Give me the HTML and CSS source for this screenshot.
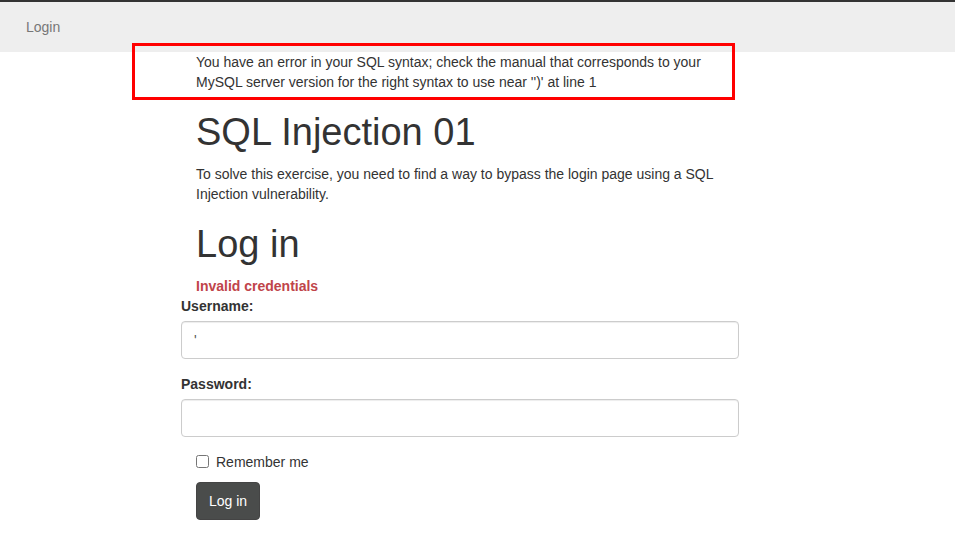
FILE: index.html
```html
<!DOCTYPE html>
<html lang="en">
<head>
    <meta charset="UTF-8">
    <meta name="viewport" content="width=device-width, initial-scale=1.0">
    <title>SQL Injection 01</title>

    <link rel="stylesheet" href="styles.css">

</head>
<body>
<nav class="navbar">
    <a href="#" class="navbar-link">Login</a>
</nav>

<div class="container">
    <div class="sql-error">
        You have an error in your SQL syntax; check the manual that corresponds to your
        MySQL server version for the right syntax to use near '')' at line 1
    </div>

    <h1>SQL Injection 01</h1>
    <p>To solve this exercise, you need to find a way to bypass the login page using a SQL Injection vulnerability.</p>

    <h1>Log in</h1>

    <form class="login-form">
        <div class="text-danger">Invalid credentials</div>
        <div class="form-row">
            <label for="username">Username:</label>
            <input type="text" class="form-control" id="username" name="username" value="'">
        </div>
        <div class="form-row">
            <label for="password">Password:</label>
            <input type="password" class="form-control" id="password" name="password">
        </div>
        <div class="checkbox">
            <label><input type="checkbox" name="remember"> Remember me</label>
        </div>
        <button type="submit" class="btn">Log in</button>
    </form>
</div>

<!-- highlight drawn round the database error -->
<div class="error-mark"></div>
</body>
</html>
```

FILE: styles.css
```css
* {
    box-sizing: border-box;
}

body {
    font-family: "Liberation Sans", Arial, sans-serif;
    font-size: 14px;
    line-height: 20px;
    color: #333;
    margin: 0;
    background: #fff;
    position: relative;
}

.navbar {
    height: 52px;
    background-color: #eee;
    border-top: 2px solid #333;
    padding: 0 26px;
    display: flex;
    align-items: center;
}

.navbar-link {
    color: #777;
    text-decoration: none;
    font-size: 14px;
}

.container {
    width: 528px;
    margin-left: 196px;
}

.sql-error {
    line-height: 20px;
}

h1 {
    font-size: 38px;
    font-weight: 400;
    line-height: 1.1;
    margin: 20px 0 10px;
}

p {
    margin: 0 0 10px;
}

.text-danger {
    color: #c0444a;
    font-weight: bold;
}

/* inputs stretch 15px past the text column on both sides */
.form-row {
    margin: 0 -15px 15px;
}

.form-row label {
    display: block;
    font-weight: bold;
    margin-bottom: 5px;
}

.form-control {
    display: block;
    width: 100%;
    height: 38px;
    padding: 8px 12px;
    font-family: inherit;
    font-size: 14px;
    color: #555;
    border: 1px solid #ccc;
    border-radius: 4px;
    box-shadow: inset 0 1px 1px rgba(0, 0, 0, 0.075);
}

.checkbox {
    margin-bottom: 10px;
}

.checkbox label {
    display: flex;
    align-items: center;
    gap: 7px;
}

.checkbox input {
    width: 13px;
    height: 13px;
    margin: 0;
}

.btn {
    background-color: #4a4c4b;
    color: #fff;
    font-family: inherit;
    font-size: 14px;
    line-height: 20px;
    padding: 8px 12px;
    border: 1px solid #444;
    border-radius: 4px;
    cursor: pointer;
}

.error-mark {
    position: absolute;
    left: 132px;
    top: 43px;
    width: 603px;
    height: 57px;
    border: 3px solid #f00;
    pointer-events: none;
}
```
